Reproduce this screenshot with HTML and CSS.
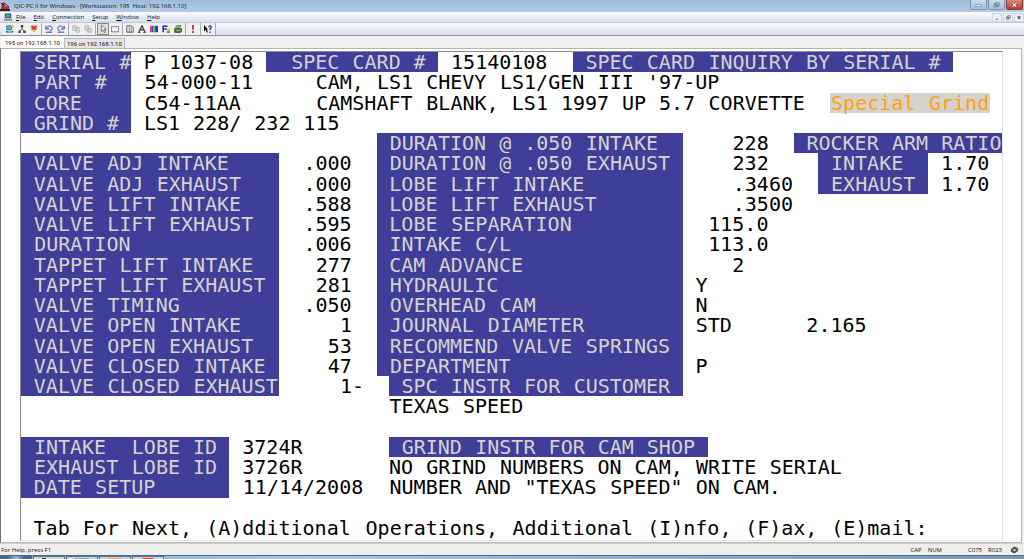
FILE: index.html
```html
<!DOCTYPE html>
<html lang="en">
<head>
<meta charset="utf-8">
<title>QIC-PC II for Windows</title>
<link rel="stylesheet" href="styles.css">
</head>
<body>
<header class="titlebar">
  <svg class="app-icon" viewBox="0 0 10 10"><path d="M0 8h10v2H0z" fill="#222"/><path d="M1 8l1-6 2-1 1 4 4 1v2z" fill="#c22"/><path d="M1 2l3 3M4 2l5 4" stroke="#222"/></svg>
  <h1 class="title">QIC-PC II for Windows - [Workstation: 195&nbsp; Host: 192.168.1.10]</h1>
  <div class="window-buttons">
    <button class="win-btn" aria-label="Minimize"><svg viewBox="0 0 10 6"><path d="M2 2.500h6v2H2z" fill="#fff" stroke="#567" stroke-width=".6"/></svg></button>
    <button class="win-btn" aria-label="Restore"><svg viewBox="0 0 10 6"><path d="M4 .7h4v3H4zM2.500 2h4v3h-4z" fill="#fff" stroke="#456" stroke-width=".8"/></svg></button>
    <button class="win-btn close" aria-label="Close"><svg viewBox="0 0 10 6"><path d="M3 1l4 4M7 1L3 5" stroke="#533" stroke-width="2.200"/><path d="M3 1l4 4M7 1L3 5" stroke="#fff" stroke-width="1.300"/></svg></button>
  </div>
</header>
<nav class="menubar">
  <svg class="menu-icon" viewBox="0 0 10 9"><path d="M1 0h8v6H1z" fill="#345"/><path d="M2 1h6v4H2z" fill="#3aa9a5"/><path d="M0 7h10v2H0z" fill="#789"/></svg>
  <button class="menu"><u>F</u>ile</button>
  <button class="menu"><u>E</u>dit</button>
  <button class="menu"><u>C</u>onnection</button>
  <button class="menu"><u>S</u>etup</button>
  <button class="menu"><u>W</u>indow</button>
  <button class="menu"><u>H</u>elp</button>
  <div class="child-buttons">
    <button class="child-btn" aria-label="Minimize document"><svg viewBox="0 0 8 8"><path d="M2.500 6h3" stroke="#457"/></svg></button>
    <button class="child-btn" aria-label="Restore document"><svg viewBox="0 0 8 8"><path d="M3.500 2h3v2.500h-3zM2 3.500h3V6H2z" fill="#fff" stroke="#457" stroke-width=".8"/></svg></button>
    <button class="child-btn" aria-label="Close document"><svg viewBox="0 0 8 8"><path d="M2.500 2.500l3 3M5.500 2.500l-3 3" stroke="#457" stroke-width="1.300"/></svg></button>
  </div>
</nav>
<div class="toolbar">
  <div class="tools">
    <button class="tool" aria-label="New session"><svg viewBox="0 0 10 10"><path d="M1 1h6v5H1z" fill="#3bc7d4" stroke="#257"/><path d="M0 7.500h9v2H0z" fill="#258"/><path d="M8 0v4M6 2h4" stroke="#eac820" stroke-width="1.300"/><path d="M2 8.500h5" stroke="#dff"/></svg></button>
    <button class="tool" aria-label="Connect"><svg viewBox="0 0 10 10"><path d="M5 2v3M5 5L2 8M5 5l3 3" stroke="#444" fill="none"/><path d="M3.500 0h3v3h-3zM.5 7h3v3h-3zM6.500 7h3v3h-3z" fill="#444"/></svg></button>
    <button class="tool" aria-label="Disconnect"><svg viewBox="0 0 10 10"><path d="M1 1h8v3L6 6v3H4V6L1 4z" fill="#d8a13b"/><path d="M2 1l6 5M8 1L2 6" stroke="#d22" stroke-width="1.600"/></svg></button>
  </div>
  <div class="tools">
    <button class="tool" aria-label="Undo"><svg viewBox="0 0 10 10"><path d="M1 1v4h4M1.500 4.500C4-.5 9 1 9 4.500 9 6 8 7 6 7M1 9h8" fill="none" stroke="#2440d0" stroke-width="1.200"/></svg></button>
    <button class="tool" aria-label="Redo"><svg viewBox="0 0 10 10"><path d="M9 1v4H5M8.500 4.500C6-.5 1 1 1 4.500 1 6 2 7 4 7M1 9h8" fill="none" stroke="#2440d0" stroke-width="1.200"/></svg></button>
  </div>
  <div class="tools">
    <button class="tool" aria-label="Copy"><svg viewBox="0 0 10 10"><path d="M1 1h4v6H1zM5 3h4v6H5z" fill="#eee" stroke="#aaa"/><path d="M6 5h2M6 7h2M2 3h2M2 5h2" stroke="#aaa" stroke-width=".8"/></svg></button>
    <button class="tool" aria-label="Paste"><svg viewBox="0 0 10 10"><path d="M1 1h5v5H1zM4 4h5v5H4z" fill="#eee" stroke="#aaa"/><path d="M5 6h3M5 8h3M2 3h3" stroke="#aaa" stroke-width=".8"/></svg></button>
  </div>
  <div class="tools">
    <button class="tool pressed" aria-label="Pointer"><svg viewBox="0 0 10 10"><path d="M3 0v8l2-2 1.500 3.500L8 9 6.500 5.500H9z" fill="#fff" stroke="#333" stroke-width=".8"/></svg></button>
    <button class="tool" aria-label="Select block"><svg viewBox="0 0 10 10"><path d="M.5 2h9v6.500h-9z" fill="none" stroke="#444" stroke-dasharray="1.500 .5"/></svg></button>
  </div>
  <div class="tools">
    <button class="tool" aria-label="Screen size"><svg viewBox="0 0 10 10"><path d="M1 1h6l2 2v6H1z" fill="#fff" stroke="#333"/><path d="M4 2v7M6.500 2v7" stroke="#333" stroke-width=".8"/></svg></button>
    <button class="tool" aria-label="Font"><svg viewBox="0 0 10 10"><path d="M1 9l4-8 4 8M3 6h4" fill="none" stroke="#333" stroke-width="1.500"/><path d="M0 9.300h3M6.500 9.300H10" stroke="#333"/></svg></button>
    <button class="tool" aria-label="Colors"><svg viewBox="0 0 10 10"><path d="M0 1h3v8H0z" fill="#f02bd4"/><path d="M3 1h1v8H3zM6 1h1v8H6z" fill="#111"/><path d="M4 1h2v8H4z" fill="#19ce38"/><path d="M7 1h3v8H7z" fill="#2434e8"/></svg></button>
    <button class="tool" aria-label="Function keys"><svg viewBox="0 0 10 10"><path d="M1.500 9V1.500H7M2 5h4" fill="none" stroke="#1d30c8" stroke-width="2"/><path d="M6 5h4v4H6z" fill="#e4bf24"/><path d="M6 9h4" stroke="#222"/></svg></button>
    <button class="tool" aria-label="Print"><svg viewBox="0 0 10 10"><path d="M3 0h6L7 4H2z" fill="#9ab08a" stroke="#555" stroke-width=".7"/><path d="M0 4h10v4L8 10H1L0 8z" fill="#496b35"/><path d="M2 7h6" stroke="#bc9"/></svg></button>
  </div>
  <div class="tools">
    <button class="tool" aria-label="Attention"><svg viewBox="0 0 10 10"><path d="M5 0v6M5 7.500V10" stroke="#b01818" stroke-width="2"/></svg></button>
  </div>
  <div class="tools">
    <button class="tool" aria-label="Context help"><svg viewBox="0 0 10 10"><path d="M0 0v8l2-2 1.500 3.500L5 9 3.500 5.500H5z" fill="#111"/><path d="M6 3c0-3 3.500-2 3 0L7.500 5v1.500M7.500 8v2" fill="none" stroke="#203090" stroke-width="1.500"/></svg></button>
  </div>
</div>
<div class="tabs" role="tablist">
  <button class="tab active" role="tab" aria-selected="true">195 on 192.168.1.10</button>
  <button class="tab" role="tab" aria-selected="false">196 on 192.168.1.10</button>
</div>
<main class="workspace">
  <div class="terminal" id="terminal"></div>
</main>
<footer class="statusbar">
  <span class="hint">For Help, press F1</span>
  <span class="indicator">CAP</span>
  <span class="indicator wide">NUM</span>
  <span class="indicator">C075</span>
  <span class="indicator">R023</span>
  <svg class="status-icon" viewBox="0 0 10 8"><path d="M1 3l4-3 4 2v3L5 8 1 6z" fill="#555"/><path d="M3 4l2-1.500L7 4 5 5.500z" fill="#ccc"/></svg>
</footer>
<div class="taskbar">
  <span class="start"></span>
  <span class="task"><i class="glyph dark"></i></span>
  <span class="task"><i class="glyph pale"></i></span>
  <span class="task"><i class="glyph orange"></i></span>
  <span class="task"><i class="glyph red"></i></span>
</div>
<script src="terminal.js"></script>
</body>
</html>
```
FILE: styles.css
```css
* { box-sizing: border-box; }
body {
  margin: 0;
  min-height: 100vh;
  display: flex;
  flex-direction: column;
  background: #f0f0f0;
  color: #111;
  font: 6px/8px "Open Sans", "Noto Sans", sans-serif;
}
button {
  margin: 0;
  padding: 0;
  border: 0;
  background: none;
  color: inherit;
  font: inherit;
}
svg { display: block; }

.titlebar {
  display: flex;
  align-items: center;
  gap: 4px;
  height: 12px;
  padding-right: 1px;
  background: linear-gradient(#9fbbdc, #b4cce6);
}
.app-icon { width: 10px; height: 10px; }
.title { flex: 1; margin: 0; font: inherit; white-space: nowrap; }
.window-buttons { display: flex; align-self: flex-start; gap: 1px; }
.win-btn {
  width: 17px;
  height: 10px;
  padding: 2px 3px;
  border: 1px solid #7f94ad;
  border-top: 0;
  border-radius: 0 0 2px 2px;
  background: linear-gradient(#c9dbee, #a6c0dc);
}
.win-btn.close { background: linear-gradient(#dc8a7c, #c03d28); border-color: #7c4142; }
.win-btn svg { width: 100%; height: 6px; }

.menubar {
  display: flex;
  align-items: center;
  gap: 8px;
  height: 11px;
  padding-left: 4px;
  background: linear-gradient(#fafbfe, #d6dff0);
  border-bottom: 1px solid #c3c8d2;
}
.menu-icon { width: 8px; height: 8px; margin-right: -4px; }
.menu u { text-underline-offset: 1px; }
.child-buttons { display: flex; gap: 1px; margin-left: auto; }
.child-btn { width: 10px; height: 9px; border: 1px solid #ccd6e4; background: #edf2fa; }
.child-btn svg { width: 8px; height: 7px; }

.toolbar {
  display: flex;
  align-items: center;
  height: 13px;
  padding-left: 3px;
  background: linear-gradient(#f8f9fd, #d8dff0);
  border-bottom: 1px solid #8f939b;
}
.tools {
  display: flex;
  height: 12px;
  padding: 0 1px;
  background: #f0f0f0;
  border-right: 1px solid #a9abb0;
}
.tool { width: 12px; height: 12px; padding: 1px; border: 1px solid transparent; }
.tool.pressed { border-color: #888; background: #e0e0e0; }
.tool svg { width: 8px; height: 8px; }

.tabs {
  display: flex;
  align-items: flex-end;
  height: 12px;
  padding-left: 1px;
  font-family: Roboto, "Open Sans", sans-serif;
}
.tab { height: 10px; padding: 0 2px; border: 1px solid #bbb; border-bottom: 0; background: #e4e4e4; white-space: nowrap; }
.tab.active { height: 12px; padding: 0 3px; background: #fff; border-color: #fff; }

.workspace {
  flex: 1;
  display: flex;
  margin-right: 2px;
  padding: 2px 18px 1px 19px;
  border: 1px solid #b4b4b4;
  border-left: 1px solid #777;
  background: #fff;
}
.terminal {
  flex: 1;
  display: grid;
  grid-template-rows: repeat(24, minmax(20px, 1fr));
  padding-bottom: 2px;
  border: 1px solid #e4e4e4;
  border-top-color: #8a8a8a;
  border-left-color: #8a8a8a;
  color: #000;
  font: 20px/20px "DejaVu Sans Mono", "Liberation Mono", monospace;
}
.row { display: grid; grid-template-columns: repeat(80, minmax(0, 1fr)); }
.field { display: grid; grid-template-columns: subgrid; }
.label { background: #3f3e99; color: #d6d3ce; }
.alert { background: #d6d3ce; color: #ffa010; }
.word { justify-self: center; white-space: nowrap; }

.statusbar {
  display: flex;
  align-items: center;
  gap: 6px;
  height: 12px;
  padding: 0 5px 0 1px;
  background: #f0eeed;
  border-top: 1px solid #d2d0d0;
}
.hint { flex: 1; }
.indicator.wide { margin-right: 20px; }
.status-icon { width: 9px; height: 8px; margin-left: 2px; }

.taskbar {
  display: flex;
  gap: 1px;
  height: 4px;
  overflow: hidden;
  background: linear-gradient(90deg, #8bafd4, #a8c6e6 30%, #7795b5);
  border-top: 1px solid #52687f;
}
.start { width: 32px; background: radial-gradient(circle at 50% 100%, #9cc6e0, #436987 50%); }
.task { width: 32px; padding: 1px 8px 0; background: #c7d6e4; border: 1px solid #5d7389; border-bottom: 0; }
.glyph { display: block; height: 3px; }
.dark { width: 4px; background: #333; }
.pale { background: #79b0d4; }
.orange { background: #e8a878; }
.red { background: #d8402f; border-radius: 4px 4px 0 0; }
```
FILE: terminal.js
```js
// Each field: row, first column, text, optional style, optional width in columns.
const fields = [
  [0, 0, " SERIAL #", "label", 9], [0, 10, "P 1037-08"],
  [0, 20, "  SPEC CARD #", "label", 14], [0, 35, "15140108"],
  [0, 45, " SPEC CARD INQUIRY BY SERIAL #", "label", 31],
  [1, 0, " PART #", "label", 9], [1, 10, "54-000-11"],
  [1, 24, "CAM, LS1 CHEVY LS1/GEN III '97-UP"],
  [2, 0, " CORE", "label", 9], [2, 10, "C54-11AA"],
  [2, 24, "CAMSHAFT BLANK, LS1 1997 UP 5.7 CORVETTE"],
  [2, 66, "Special Grind", "alert", 13],
  [3, 0, " GRIND #", "label", 9], [3, 10, "LS1 228/ 232 115"],
  [4, 29, " DURATION @ .050 INTAKE", "label", 25], [4, 58, "228"],
  [4, 63, " ROCKER ARM RATIO", "label", 17],
  [5, 0, " VALVE ADJ INTAKE", "label", 21], [5, 23, ".000"],
  [5, 29, " DURATION @ .050 EXHAUST", "label", 25], [5, 58, "232"],
  [5, 65, " INTAKE", "label", 9], [5, 75, "1.70"],
  [6, 0, " VALVE ADJ EXHAUST", "label", 21], [6, 23, ".000"],
  [6, 29, " LOBE LIFT INTAKE", "label", 25], [6, 58, ".3460"],
  [6, 65, " EXHAUST", "label", 9], [6, 75, "1.70"],
  [7, 0, " VALVE LIFT INTAKE", "label", 21], [7, 23, ".588"],
  [7, 29, " LOBE LIFT EXHAUST", "label", 25], [7, 58, ".3500"],
  [8, 0, " VALVE LIFT EXHAUST", "label", 21], [8, 23, ".595"],
  [8, 29, " LOBE SEPARATION", "label", 25], [8, 56, "115.0"],
  [9, 0, " DURATION", "label", 21], [9, 23, ".006"],
  [9, 29, " INTAKE C/L", "label", 25], [9, 56, "113.0"],
  [10, 0, " TAPPET LIFT INTAKE", "label", 21], [10, 24, "277"],
  [10, 29, " CAM ADVANCE", "label", 25], [10, 58, "2"],
  [11, 0, " TAPPET LIFT EXHAUST", "label", 21], [11, 24, "281"],
  [11, 29, " HYDRAULIC", "label", 25], [11, 55, "Y"],
  [12, 0, " VALVE TIMING", "label", 21], [12, 23, ".050"],
  [12, 29, " OVERHEAD CAM", "label", 25], [12, 55, "N"],
  [13, 0, " VALVE OPEN INTAKE", "label", 21], [13, 26, "1"],
  [13, 29, " JOURNAL DIAMETER", "label", 25], [13, 55, "STD"], [13, 64, "2.165"],
  [14, 0, " VALVE OPEN EXHAUST", "label", 21], [14, 25, "53"],
  [14, 29, " RECOMMEND VALVE SPRINGS", "label", 25],
  [15, 0, " VALVE CLOSED INTAKE", "label", 21], [15, 25, "47"],
  [15, 29, " DEPARTMENT", "label", 25], [15, 55, "P"],
  [16, 0, " VALVE CLOSED EXHAUST", "label", 21], [16, 26, "1-"],
  [16, 30, " SPC INSTR FOR CUSTOMER", "label", 24],
  [17, 30, "TEXAS SPEED"],
  [19, 0, " INTAKE  LOBE ID", "label", 17], [19, 18, "3724R"],
  [19, 30, " GRIND INSTR FOR CAM SHOP", "label", 26],
  [20, 0, " EXHAUST LOBE ID", "label", 17], [20, 18, "3726R"],
  [20, 30, "NO GRIND NUMBERS ON CAM, WRITE SERIAL"],
  [21, 0, " DATE SETUP", "label", 17], [21, 18, "11/14/2008"],
  [21, 30, "NUMBER AND \"TEXAS SPEED\" ON CAM."],
  [23, 1, "Tab For Next, (A)dditional Operations, Additional (I)nfo, (F)ax, (E)mail:"]
];

const terminal = document.getElementById("terminal");
const rows = Array.from({ length: 24 }, () => {
  const row = document.createElement("div");
  row.className = "row";
  terminal.append(row);
  return row;
});

for (const [row, col, text, style = "value", width = text.length] of fields) {
  const field = document.createElement("div");
  field.className = "field " + style;
  field.style.gridColumn = `${col + 1} / span ${width}`;
  field.style.gridRow = "1";
  for (const match of text.matchAll(/\S+/g)) {
    const word = document.createElement("span");
    word.className = "word";
    word.textContent = match[0];
    word.style.gridColumn = `${match.index + 1} / span ${match[0].length}`;
    field.append(word, " ");
  }
  rows[row].append(field);
}
```
